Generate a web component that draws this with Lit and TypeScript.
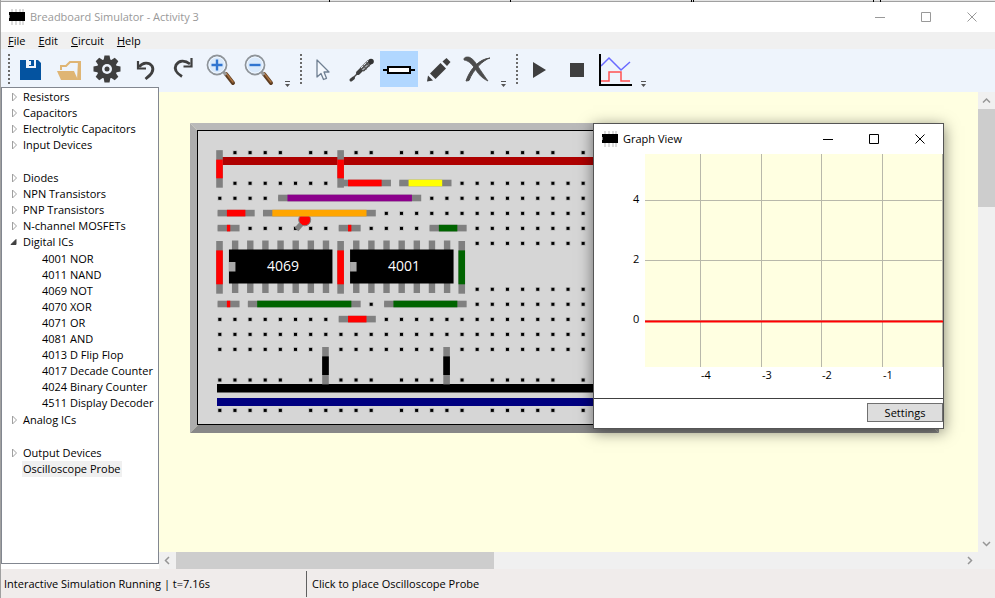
import { LitElement, html, css, svg, nothing } from "lit";
import type { SVGTemplateResult, TemplateResult } from "lit";
import { customElement, property, state } from "lit/decorators.js";
import { classMap } from "lit/directives/class-map.js";

const FONT = css`"Open Sans", "Noto Sans", sans-serif`;

/* ---------- shared pieces ---------- */

const chipLogo = html`<svg class="logo" width="16" height="16" viewBox="0 0 16 16" aria-hidden="true">
  <path d="M2 0h2v16H2zM6 0h2v16H6zM10 0h2v16h-2zM13 0h2v16h-2z" fill="#dcdcdc" />
  <rect y="3" width="16" height="9" fill="#000" />
  <rect y="6" width="1" height="3" fill="#888" />
</svg>`;

const captionIcons: Record<string, SVGTemplateResult> = {
  Minimize: svg`<path d="M0 5.5h10" />`,
  Maximize: svg`<path d="M.5.5h9v9h-9z" />`,
  Close: svg`<path d="M.5.5l9 9M9.5.5l-9 9" />`,
};

const captionButtons = () =>
  Object.entries(captionIcons).map(
    ([name, shape]) => html`<button class="caption" aria-label=${name}>
      <svg width="10" height="10" viewBox="0 0 10 10" fill="none" stroke="currentColor">${shape}</svg>
    </button>`
  );

const captionStyles = css`
  .caption {
    width: 46px;
    height: 28px;
    padding: 0;
    border: 0;
    background: none;
    color: inherit;
    display: grid;
    place-items: center;
  }
  .caption svg {
    overflow: visible;
  }
`;

/* ---------- toolbar ---------- */

const lens = (plus: boolean) => svg`
  <path d="M21 21l7 9" stroke="#5d3d22" stroke-width="4" stroke-linecap="round" />
  <path d="M21 20l7 9" stroke="#a9713f" stroke-width="1.5" stroke-linecap="round" />
  <path d="M17 17l4 5" stroke="#9a9a9a" stroke-width="3" />
  <circle cx="12" cy="12" r="9.500" fill="#d9e9fb" stroke="#8f9499" stroke-width="1.8" />
  <circle cx="12" cy="12" r="8" fill="none" stroke="#eef6ff" stroke-width="1" />
  <path d=${plus ? "M6.500 12h11M12 6.500v11" : "M6.500 12h11"} stroke="#2f74d0" stroke-width="2.400" />`;

const icons: Record<string, SVGTemplateResult> = {
  save: svg`<path d="M5 7h18l3 3v17H5z" fill="#0453a0" />
    <path d="M11 7h10v8H11z" fill="#eef4fc" /><path d="M14 7h5v6h-5z" fill="#0453a0" />
    <path d="M14 8h2v4h-2z" fill="#eef4fc" />`,
  open: svg`<path d="M8 17v-4h5l4-4h9v17" fill="none" stroke="#dfb574" stroke-width="2" />
    <path d="M4 18h17l4 9H8z" fill="#dfb574" /><path d="M25 8h3v19h-4z" fill="#dfb574" />`,
  settings: svg`<g fill="#3f3f3f">
      ${[0, 45, 90, 135].map((a) => svg`<path d="M13.500 2.500h5l1 5v17l-1 5h-5l-1-5v-17z" transform="rotate(${a} 16 16)" />`)}
      <circle cx="16" cy="16" r="10" /></g>
    <circle cx="16" cy="16" r="5" fill="#eef4fc" /><circle cx="16" cy="16" r="2.500" fill="#3f3f3f" />`,
  undo: svg`<path d="M10 14c4-5 10-5 13-1 3 5-1.500 9-6.500 13" fill="none" stroke="#3f3f3f" stroke-width="2.800" />
    <path d="M9 8v7.500h8" fill="none" stroke="#3f3f3f" stroke-width="2.200" />`,
  redo: svg`<path d="M23 11c-5-4-11-4-14 1-2.500 5 1 8.500 6 11.500" fill="none" stroke="#3f3f3f" stroke-width="2.800" />
    <path d="M24.500 5v8.500H16.500" fill="none" stroke="#3f3f3f" stroke-width="2.200" />`,
  zoomIn: lens(true),
  zoomOut: lens(false),
  select: svg`<path d="M10 7v17l4-3.500 2.500 6 3-1.200-2.500-6.300h5z" fill="#f4f8fd" stroke="#6f7f92" stroke-width="1.300" stroke-linejoin="round" />`,
  probe: svg`<path d="M6.500 26.500l7-7" stroke="#4a4a4a" stroke-width="1.500" stroke-linecap="round" />
    <path d="M6 27l2.500-2" stroke="#3f3f3f" stroke-width="3" stroke-linecap="round" />
    <path d="M13 20l4-4" stroke="#3f3f3f" stroke-width="4" stroke-linecap="round" />
    <path d="M17 17l8-8" stroke="#555" stroke-width="6" />
    <path d="M16 15l7-7M19 19l8-8M17.500 17l6-6" stroke="#dde4ec" stroke-width="1" stroke-dasharray="3 1" />
    <circle cx="26" cy="8.500" r="2.800" fill="#333" />`,
  component: svg`<path d="M0 17h32" stroke="#000" stroke-width="2" />
    <rect x="5" y="14" width="22" height="6" fill="#fff" stroke="#000" stroke-width="2" />`,
  edit: svg`<path d="M21.500 8.500l4-3.500 4 4-3.500 4z" fill="#3f3f3f" /><path d="M19.500 10l5.500 5.500L14.500 26 9 20.500z" fill="#3f3f3f" />
    <path d="M7 22.500l5 5-6 1z" fill="#3f3f3f" />`,
  remove: svg`<path d="M5 6c0-2 4-2.500 6-1.500 4 2 6 6 8 9s6 9 10 14.500c-7-3-10.500-8.500-13.500-13S9 7.500 5 7z" fill="#4c4c4c" stroke="#4c4c4c" stroke-width="0.800" />
    <path d="M31 5c-7 2-17 12-21 22.500l-3 .5C11 16 20 6 31 5z" fill="#4c4c4c" stroke="#4c4c4c" />`,
  play: svg`<path d="M10 9l13 8-13 8z" fill="#3f3f3f" />`,
  stop: svg`<path d="M9 10h14v14H9z" fill="#3f3f3f" />`,
  graph: svg`<path d="M2 13l8-8 12 12 9-8" fill="none" stroke="#6a6aff" stroke-width="1.500" />
    <path d="M2 28h8v-9h12v9h9" fill="none" stroke="#ff5050" stroke-width="1.500" />
    <path d="M1 1v31h32" fill="none" stroke="#000" stroke-width="2" />`,
};

const toolGroups: [string, string][][] = [
  [
    ["save", "Save"],
    ["open", "Open"],
    ["settings", "Settings"],
    ["undo", "Undo"],
    ["redo", "Redo"],
    ["zoomIn", "Zoom in"],
    ["zoomOut", "Zoom out"],
  ],
  [
    ["select", "Select"],
    ["probe", "Interact"],
    ["component", "Place component"],
    ["edit", "Edit"],
    ["remove", "Delete"],
  ],
  [
    ["play", "Run"],
    ["stop", "Stop"],
    ["graph", "Graph view"],
  ],
];

@customElement("tool-bar")
export class ToolBar extends LitElement {
  @state() private active = "component";

  static styles = css`
    :host {
      display: flex;
      gap: 1px;
      padding: 2px 5px 0;
      background: #eef4fc;
    }
    .group {
      display: flex;
    }
    .grip {
      width: 2px;
      height: 30px;
      margin: 3px 2px 0;
      background: repeating-linear-gradient(#6b6b6b 0 2px, transparent 2px 4px);
    }
    button {
      padding: 0;
      border: 0;
      background: none;
    }
    .tool {
      width: 38px;
      height: 36px;
      display: grid;
      place-items: center;
    }
    .tool.active {
      background: #b1d7ff;
    }
    .tool svg {
      overflow: visible;
    }
    .more {
      width: 19px;
      display: grid;
      justify-items: center;
      align-items: end;
    }
  `;

  render() {
    return toolGroups.map(
      (group) => html`<div class="group" role="toolbar">
        <span class="grip"></span>
        ${group.map(
          ([id, label]) => html`<button
            class=${classMap({ tool: true, active: this.active === id })}
            aria-label=${label}
            @click=${() => (this.active = id)}
          >
            <svg width="32" height="32" viewBox="0 0 32 32">${icons[id]}</svg>
          </button>`
        )}
        <button class="more" aria-label="More tools">
          <svg width="5" height="6" viewBox="0 0 5 6" fill="#555"><path d="M0 0h5v1H0zM0 3h5L2.500 6z" /></svg>
        </button>
      </div>`
    );
  }
}

/* ---------- component tree ---------- */

interface Entry {
  label: string;
  gapBefore?: boolean;
  leaf?: boolean;
  children?: string[];
}

const catalogue: Entry[] = [
  { label: "Resistors" },
  { label: "Capacitors" },
  { label: "Electrolytic Capacitors" },
  { label: "Input Devices" },
  { label: "Diodes", gapBefore: true },
  { label: "NPN Transistors" },
  { label: "PNP Transistors" },
  { label: "N-channel MOSFETs" },
  {
    label: "Digital ICs",
    children: [
      "4001 NOR",
      "4011 NAND",
      "4069 NOT",
      "4070 XOR",
      "4071 OR",
      "4081 AND",
      "4013 D Flip Flop",
      "4017 Decade Counter",
      "4024 Binary Counter",
      "4511 Display Decoder",
    ],
  },
  { label: "Analog ICs" },
  { label: "Output Devices", gapBefore: true },
  { label: "Oscilloscope Probe", leaf: true },
];

@customElement("component-tree")
export class ComponentTree extends LitElement {
  @state() private selected = "Oscilloscope Probe";

  static styles = css`
    :host {
      display: block;
      box-sizing: border-box;
      padding: 1px 0 0 8px;
      border: 1px solid #828790;
      background: #fff;
      overflow: hidden;
    }
    ul {
      margin: 0;
      padding: 0;
      list-style: none;
    }
    ul ul {
      padding: 1px 0 1px 31px;
    }
    .gap {
      margin-top: 17px;
    }
    .row {
      display: flex;
      align-items: center;
      height: 16px;
    }
    .arrow {
      width: 12px;
      height: 10px;
    }
    button {
      height: 16px;
      padding: 0 1px;
      border: 0;
      background: none;
      font: 11px/16px ${FONT};
      color: #000;
      white-space: nowrap;
    }
    .selected {
      background: #f0f0f0;
    }
  `;

  private item(label: string) {
    return html`<button
      class=${classMap({ selected: this.selected === label })}
      @click=${() => (this.selected = label)}
    >${label}</button>`;
  }

  render() {
    return html`<ul>
      ${catalogue.map(
        (e) => html`<li class=${classMap({ gap: !!e.gapBefore })}>
          <div class="row">
            <svg class="arrow" viewBox="0 0 12 10" aria-hidden="true">
              ${e.leaf
                ? nothing
                : e.children
                  ? svg`<path d="M6 2.500v5H1z" fill="#404040" stroke="#404040" />`
                  : svg`<path d="M2.500 1v8l4-4z" fill="#fff" stroke="#a0a0a0" />`}
            </svg>
            ${this.item(e.label)}
          </div>
          ${e.children
            ? html`<ul>${e.children.map((c) => html`<li class="row">${this.item(c)}</li>`)}</ul>`
            : nothing}
        </li>`
      )}
    </ul>`;
  }
}

/* ---------- breadboard ---------- */

const PITCH = 15.14;
const colX = (c: number) => 29.8 + PITCH * c;
const ROWS = {
  railTop: 29.6, a: 60.3, b: 75.3, c: 90.4, d: 105.4, e: 120.4,
  f: 166.3, g: 181.3, h: 196.4, i: 211.4, j: 226.4, railLow: 257, railBottom: 287.4,
};
const COLUMNS = Array.from({ length: 48 }, (_, i) => i);

const holes = () => {
  const out: SVGTemplateResult[] = [];
  for (const [name, y] of Object.entries(ROWS)) {
    for (const c of COLUMNS) {
      if (name.startsWith("rail") && c % 6 === 5) continue;
      out.push(svg`<rect x=${colX(c) - 2.3} y=${y - 2.3} width="4.600" height="4.600" fill="#b9b9b9" />
        <rect x=${colX(c) - 1.5} y=${y - 1.5} width="3" height="3" fill="#000" />`);
    }
  }
  return out;
};

const flatWire = (from: number, to: number, row: number, color: string) => {
  const x = colX(from) - 2.2;
  const end = colX(to) + 4.6;
  return svg`<rect x=${x} y=${row - 3.6} width=${end - x} height="6.600" fill="#808080" />
    <rect x=${x + 9.3} y=${row - 3.6} width=${end - x - 18.6} height="6.600" fill=${color} />`;
};

const uprightWire = (col: number, from: number, to: number, color: string) => {
  const x = colX(col) - 3.6;
  const y = from - 2.4;
  const end = to + 4.4;
  return svg`<rect x=${x} y=${y} width="6.600" height=${end - y} fill="#808080" />
    <rect x=${x} y=${y + 9.4} width="6.600" height=${end - y - 18.8} fill=${color} />`;
};

const chip = (firstCol: number, name: string) => {
  const x = colX(firstCol) - 6;
  return svg`${Array.from({ length: 7 }, (_, i) => svg`
      <rect x=${colX(firstCol + i) - 3} y="117.500" width="6.400" height="52.500" fill="#808080" />`)}
    <rect x=${x} y="126.500" width="103.500" height="34" fill="#000" />
    <rect x=${x} y="139" width="6.500" height="9.500" fill="#a9a9a9" />
    <text x=${x + 54} y="148" text-anchor="middle" fill="#fff" class="chip">${name}</text>`;
};

@customElement("bread-board")
export class BreadBoard extends LitElement {
  static styles = css`
    :host {
      display: block;
    }
    svg {
      display: block;
    }
    .chip {
      font: 14px ${FONT};
    }
  `;

  render() {
    const R = ROWS;
    return html`<svg width="750" height="310" viewBox="0 0 750 310" role="img" aria-label="Breadboard">
      <path d="M0 0h749l-8 8H8z" fill="#b9b9b9" />
      <path d="M0 0l8 8v294l-8 8z" fill="#adadad" />
      <path d="M749 0l-8 8v294l8 8z" fill="#8f8f8f" />
      <path d="M0 310l8-8h733l8 8z" fill="#888" />
      <rect x="7.500" y="7.500" width="734" height="294" fill="#d6d6d6" stroke="#000" />
      ${holes()}
      <rect x="27" y="34" width="700" height="8" fill="#ae0000" />
      <rect x="27" y="261" width="700" height="8.500" fill="#000" />
      <rect x="27" y="275" width="700" height="8" fill="#000080" />
      ${[0, 8].map((c) => uprightWire(c, R.railTop, R.a, "#f00"))}
      ${flatWire(8, 11, R.a, "#f00")} ${flatWire(12, 15, R.a, "#ff0")} ${flatWire(4, 13, R.b, "#8b008b")}
      ${flatWire(0, 2, R.c, "#f00")}
      <path d="M106.500 106.500l7-8" stroke="#808080" stroke-width="5" />
      <circle cx="114.700" cy="96.800" r="6" fill="#f00" stroke="#808080" />
      ${flatWire(3, 10, R.c, "#ffa500")}
      ${flatWire(0, 1, R.d, "#f00")} ${flatWire(8, 9, R.d, "#f00")} ${flatWire(14, 16, R.d, "#006400")}
      ${chip(1, "4069")} ${chip(9, "4001")}
      ${[0, 8].map((c) => uprightWire(c, R.e, R.f, "#f00"))} ${uprightWire(16, R.e, R.f, "#006400")}
      ${flatWire(0, 1, R.g, "#f00")} ${flatWire(2, 9, R.g, "#006400")} ${flatWire(11, 16, R.g, "#006400")}
      ${flatWire(8, 10, R.h, "#f00")}
      ${[7, 15].map((c) => uprightWire(c, R.j, R.railLow, "#000"))}
    </svg>`;
  }
}

/* ---------- graph window ---------- */

@customElement("graph-window")
export class GraphWindow extends LitElement {
  static styles = [
    captionStyles,
    css`
      :host {
        display: block;
        border: 1px solid #555;
        background: #fff;
        box-shadow: 0 3px 14px rgba(0, 0, 0, 0.5);
        font: 11px/16px ${FONT};
        color: #000;
      }
      header {
        display: flex;
        align-items: center;
        height: 30px;
        padding-left: 8px;
      }
      h2 {
        flex: 1;
        margin: 0 0 0 5px;
        font: inherit;
      }
      .plot {
        display: block;
        width: 100%;
        height: 244px;
      }
      .plot text {
        font: 11px ${FONT};
      }
      footer {
        display: flex;
        justify-content: flex-end;
        padding: 4px 0 6px;
        border-top: 1px solid #404040;
      }
      .settings {
        width: 76px;
        height: 19px;
        padding: 0;
        border: 1px solid #707070;
        background: #ddd;
        font: 11px/16px ${FONT};
        color: #000;
      }
    `,
  ];

  render() {
    const xs: [number, string][] = [[106, "-4"], [167, "-3"], [227, "-2"], [288, "-1"]];
    const ys: [number, string][] = [[46, "4"], [106, "2"], [166, "0"]];
    return html`<header>${chipLogo}<h2>Graph View</h2>${captionButtons()}</header>
      <svg class="plot" viewBox="0 0 349 244" preserveAspectRatio="xMinYMin meet" role="img" aria-label="Voltage against time">
        <rect x="51" width="298" height="213" fill="#ffffe1" />
        ${xs.map(([x, t]) => svg`<path d="M${x + 0.5} 0v213" stroke="#b8b8aa" /><text x=${x + 1} y="225">${t}</text>`)}
        ${ys.map(([y, t]) => svg`<path d="M51 ${y + 0.5}h298" stroke="#b8b8aa" /><text x="39" y=${y + 3}>${t}</text>`)}
        <path d="M348.500 0v213" stroke="#b8b8aa" />
        <path d="M51 167.500h298" stroke="#f00" stroke-width="2" />
      </svg>
      <footer><button class="settings">Settings</button></footer>`;
  }
}

/* ---------- scrollbars ---------- */

@customElement("scroll-strip")
export class ScrollStrip extends LitElement {
  @property({ reflect: true }) direction: "across" | "down" = "down";
  @property({ type: Number }) thumb = 20;

  static styles = css`
    :host {
      display: flex;
      background: #f0f0f0;
    }
    :host([direction="down"]) {
      flex-direction: column;
    }
    button {
      width: 17px;
      height: 17px;
      padding: 0;
      border: 0;
      background: none;
      display: grid;
      place-items: center;
    }
    .track {
      flex: 1;
      display: flex;
      flex-direction: inherit;
    }
    .thumb {
      background: #cdcdcd;
    }
  `;

  private arrow(label: string, d: string): TemplateResult {
    return html`<button aria-label=${label}>
      <svg width="9" height="9" viewBox="0 0 9 9" fill="none" stroke="#969696" stroke-width="1.500"><path d=${d} /></svg>
    </button>`;
  }

  render() {
    const down = this.direction === "down";
    return html`${down ? this.arrow("Scroll up", "M1 6.500L4.500 3 8 6.500") : this.arrow("Scroll left", "M6 1L2.500 4.500 6 8")}
      <div class="track"><div class="thumb" style="flex-basis:${this.thumb}%"></div></div>
      ${down ? this.arrow("Scroll down", "M1 3l3.500 3.500L8 3") : this.arrow("Scroll right", "M3 1l3.500 3.500L3 8")}`;
  }
}

/* ---------- main window ---------- */

@customElement("app-root")
export class AppRoot extends LitElement {
  static styles = [
    captionStyles,
    css`
      :host {
        display: flex;
        flex-direction: column;
        box-sizing: border-box;
        height: 100vh;
        border-left: 1px solid #a0a0a0;
        background: #fff;
        font: 11px/16px ${FONT};
        color: #000;
        overflow: hidden;
      }
      .backdrop {
        display: block;
        flex: none;
        width: 100%;
        height: 2px;
        background: #e4e4e4;
      }
      .title {
        display: flex;
        align-items: center;
        height: 30px;
        padding-left: 8px;
        color: #999;
      }
      h1 {
        flex: 1;
        margin: 0 0 0 5px;
        font: inherit;
      }
      .menu {
        display: flex;
        gap: 13px;
        height: 17px;
        padding-left: 7px;
        background: #f0f0f0;
      }
      .menu button {
        padding: 0;
        border: 0;
        background: none;
        font: inherit;
        color: inherit;
      }
      .work {
        flex: 1;
        display: flex;
        min-height: 0;
      }
      component-tree {
        width: 158px;
        margin-bottom: 5px;
      }
      .view {
        flex: 1;
        min-width: 0;
        display: grid;
        grid-template: minmax(0, 1fr) 17px / minmax(0, 1fr) 17px;
        border-top: 5px solid #eef4fc;
        background: #f0f0f0;
      }
      .canvas {
        position: relative;
        padding: 31px;
        background: #ffffe1;
        overflow: hidden;
      }
      graph-window {
        position: absolute;
        top: 31px;
        right: 34px;
        width: 349px;
      }
      .status {
        display: flex;
        align-items: center;
        height: 29px;
        background: #f0eceb;
      }
      .status p {
        margin: 0;
        padding: 5px 0 5px 3px;
      }
      .status .state {
        width: 302px;
      }
      .status .hint {
        padding-left: 5px;
        border-left: 1px solid #606060;
      }
    `,
  ];

  render() {
    const menus = ["File", "Edit", "Circuit", "Help"];
    return html`<svg class="backdrop" aria-hidden="true">
        <path d="M0 1.500h4000" stroke="#a0a0a0" />
        <path d="M328.500 0v2M509.500 0v2M690.500 0v2M692.500 0v2M872.500 0v2M879.500 0v2" stroke="#000" />
      </svg>
      <header class="title">${chipLogo}<h1>Breadboard Simulator - Activity 3</h1>${captionButtons()}</header>
      <nav class="menu">${menus.map((m) => html`<button><u>${m[0]}</u>${m.slice(1)}</button>`)}</nav>
      <tool-bar></tool-bar>
      <main class="work">
        <component-tree></component-tree>
        <section class="view">
          <div class="canvas">
            <bread-board></bread-board>
            <graph-window></graph-window>
          </div>
          <scroll-strip direction="down" .thumb=${23}></scroll-strip>
          <scroll-strip direction="across" .thumb=${40.5}></scroll-strip>
        </section>
      </main>
      <footer class="status">
        <p class="state">Interactive Simulation Running | t=7.16s</p>
        <p class="hint">Click to place Oscilloscope Probe</p>
      </footer>`;
  }
}
